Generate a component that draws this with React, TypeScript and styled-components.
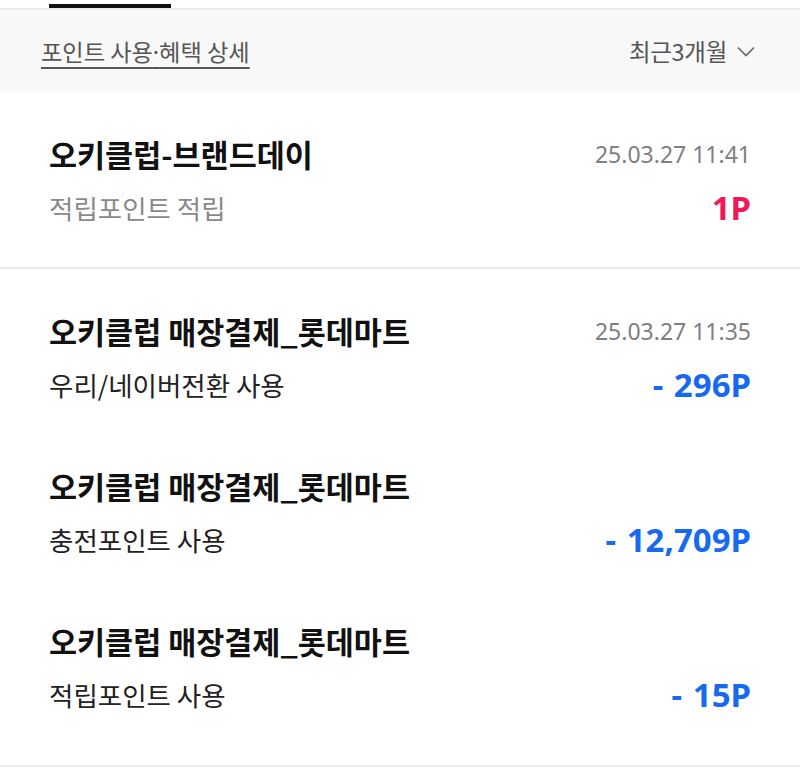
import React from "react";
import styled, { createGlobalStyle } from "styled-components";

const GlobalStyle = createGlobalStyle`
  body {
    margin: 0;
    background: #ffffff;
    font-family: "Noto Sans CJK KR", "Noto Sans", sans-serif;
  }
`;

const Page = styled.div`
  width: 800px;
  background: #fff;
`;

const TabBar = styled.div`
  height: 8px;
  padding-left: 49px;
  display: flex;
  align-items: flex-end;
  border-bottom: 2px solid #ececec;
`;

const ActiveTab = styled.div`
  width: 122px;
  height: 4px;
  background: #111;
`;

const FilterBar = styled.div`
  height: 82px;
  background: #f8f8f8;
  display: flex;
  align-items: center;
  justify-content: space-between;
  padding: 0 45px 0 41px;
`;

const DetailLink = styled.a`
  font-size: 23.2px;
  color: #555;
  text-decoration: underline;
  text-underline-offset: 6px;
  text-decoration-thickness: 1.5px;
`;

const Dot = styled.span`
  font-family: "Noto Sans", sans-serif;
`;

const PeriodSelect = styled.div`
  display: flex;
  align-items: center;
  gap: 10px;
  font-size: 23.5px;
  color: #555;
  letter-spacing: -0.3px;
`;

const Section = styled.section<{ $top: number; $bottom: number }>`
  padding: ${(p) => p.$top}px 49px ${(p) => p.$bottom}px 49px;
  border-bottom: 2px solid #ebebef;
  display: flex;
  flex-direction: column;
  gap: 67px;
`;

const Item = styled.div`
  display: flex;
  flex-direction: column;
  gap: 20px;
`;

const Row = styled.div`
  display: flex;
  justify-content: space-between;
  align-items: center;
`;

const Title = styled.div`
  font-size: 30.5px;
  font-weight: 700;
  color: #111;
  line-height: 36px;
`;

const DateText = styled.div`
  font-size: 23px;
  color: #808080;
  line-height: 36px;
  font-family: "Noto Sans", "Noto Sans CJK KR", sans-serif;
`;

const Desc = styled.div<{ $muted?: boolean }>`
  font-size: 26.5px;
  line-height: 32px;
  color: ${(p) => (p.$muted ? "#8a8a8a" : "#222")};
`;

const Amount = styled.div<{ $plus?: boolean }>`
  font-size: 33px;
  line-height: 32px;
  font-weight: 700;
  word-spacing: 2px;
  font-family: "Noto Sans", "Noto Sans CJK KR", sans-serif;
  color: ${(p) => (p.$plus ? "#f2165b" : "#1769f0")};
`;

const Chevron = () => (
  <svg width="18" height="11" viewBox="0 0 18 11" fill="none">
    <path d="M1 1.5L9 9.5L17 1.5" stroke="#666" strokeWidth="1.6" />
  </svg>
);

type Entry = {
  title: string;
  date?: string;
  desc: string;
  amount: string;
  plus?: boolean;
};

const used: Entry[] = [
  { title: "오키클럽 매장결제_롯데마트", date: "25.03.27 11:35", desc: "우리/네이버전환 사용", amount: "- 296P" },
  { title: "오키클럽 매장결제_롯데마트", desc: "충전포인트 사용", amount: "- 12,709P" },
  { title: "오키클럽 매장결제_롯데마트", desc: "적립포인트 사용", amount: "- 15P" },
];

const EntryItem = ({ e, muted }: { e: Entry; muted?: boolean }) => (
  <Item>
    <Row>
      <Title>{e.title}</Title>
      {e.date && <DateText>{e.date}</DateText>}
    </Row>
    <Row>
      <Desc $muted={muted}>{e.desc}</Desc>
      <Amount $plus={e.plus}>{e.amount}</Amount>
    </Row>
  </Item>
);

const App: React.FC = () => {
  return (
    <Page>
      <GlobalStyle />
      <TabBar>
        <ActiveTab />
      </TabBar>
      <FilterBar>
        <DetailLink>
          포인트 사용<Dot>·</Dot>혜택 상세
        </DetailLink>
        <PeriodSelect>
          최근3개월
          <Chevron />
        </PeriodSelect>
      </FilterBar>
      <Section $top={44} $bottom={43}>
        <EntryItem
          muted
          e={{ title: "오키클럽-브랜드데이", date: "25.03.27 11:41", desc: "적립포인트 적립", amount: "1P", plus: true }}
        />
      </Section>
      <Section $top={44} $bottom={54}>
        {used.map((e, i) => (
          <EntryItem key={i} e={e} />
        ))}
      </Section>
    </Page>
  );
};

export default App;
